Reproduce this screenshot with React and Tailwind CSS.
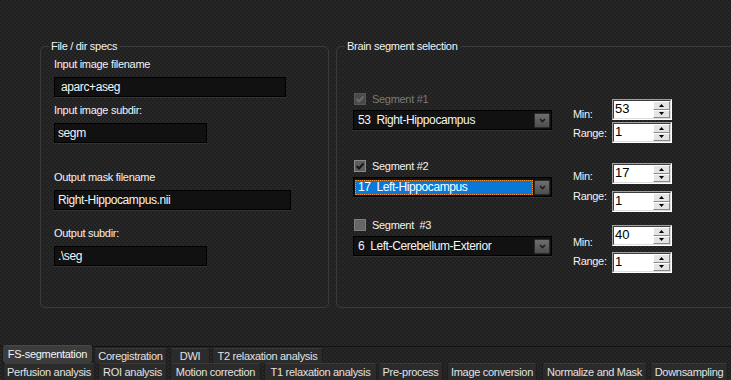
import React from 'react';

const topTabs = [
    { label: 'FS-segmentation', cls: 'ml-[3px] w-[89px]', active: true },
    { label: 'Coregistration', cls: 'ml-[2px] w-[73px]' },
    { label: 'DWI', cls: 'ml-[3px] w-[40px]' },
    { label: 'T2 relaxation analysis', cls: 'ml-[2px] w-[111px]' },
];

const bottomTabs = [
    { label: 'Perfusion analysis', cls: 'ml-[3px] w-[92px]' },
    { label: 'ROI analysis', cls: 'ml-[3px] w-[69px]' },
    { label: 'Motion correction', cls: 'ml-[3px] w-[91px]' },
    { label: 'T1 relaxation analysis', cls: 'ml-[3px] w-[113px]' },
    { label: 'Pre-process', cls: 'ml-[1px] w-[65px]' },
    { label: 'Image conversion', cls: 'ml-[4px] w-[90px]' },
    { label: 'Normalize and Mask', cls: 'ml-[5px] w-[105px]' },
    { label: 'Downsampling', cls: 'ml-[3px] w-[78px]' },
];

const segments = [
    {
        title: 'Segment #1',
        state: 'disabled',
        value: '53  Right-Hippocampus',
        min: '53',
        range: '1',
        block: 'mt-[40px]',
        minLabel: 'mt-[15px]',
        rangeLabel: 'mt-[6px]',
        minSpin: 'mt-[6px]',
        rangeSpin: 'mt-[2px]',
    },
    {
        title: 'Segment #2',
        state: 'checked',
        value: '17  Left-Hippocampus',
        selected: true,
        min: '17',
        range: '1',
        block: 'mt-[17px]',
        minLabel: 'mt-[10px]',
        rangeLabel: 'mt-[7px]',
        minSpin: 'mt-[3px]',
        rangeSpin: 'mt-[7px]',
    },
    {
        title: 'Segment  #3',
        state: 'unchecked',
        value: '6  Left-Cerebellum-Exterior',
        min: '40',
        range: '1',
        block: 'mt-[7px]',
        minLabel: 'mt-[17px]',
        rangeLabel: 'mt-[6px]',
        minSpin: 'mt-[6px]',
        rangeSpin: 'mt-[6px]',
    },
];

function TextField({ value, width, pad = 'pl-[3px]' }) {
    return (
        <div className={`${width} ${pad} h-[20px] flex items-center bg-[#111111] border border-black shadow-[0_1px_0_#333] text-[12px] tracking-[-0.4px] text-[#f4f4f4] whitespace-pre`}>
            {value}
        </div>
    );
}

function Checkbox({ state }) {
    const box = {
        disabled: 'bg-[#4a4a4a] border-[#575757]',
        checked: 'bg-[#5e5e5e] border-[#8a8a8a]',
        unchecked: 'bg-[#666666] border-[#7e7e7e]',
    }[state];
    return (
        <div className={`w-[12px] h-[12px] border ${box} flex items-center justify-center`}>
            {state !== 'unchecked' && (
                <svg width="10" height="10" viewBox="0 0 10 10">
                    <path
                        d="M1.5 5 L4 7.5 L8.5 2.5"
                        fill="none"
                        stroke={state === 'disabled' ? '#6c6c6c' : '#151515'}
                        strokeWidth="1.9"
                    />
                </svg>
            )}
        </div>
    );
}

function ComboButton() {
    return (
        <div className="w-[16px] h-[15px] mr-[1px] shrink-0 flex items-center justify-center rounded-[1px] border border-[#2a2a2a] bg-gradient-to-b from-[#6e6e6e] to-[#4e4e4e]">
            <svg width="7" height="5" viewBox="0 0 7 5">
                <path d="M1 1 L3.5 3.5 L6 1" fill="none" stroke="#1c1c1c" strokeWidth="1.6" />
            </svg>
        </div>
    );
}

function Combo({ value, selected }) {
    return (
        <div className="w-[199px] h-[20px] flex items-center justify-between bg-[#111111] border border-black shadow-[0_1px_0_#333] text-[12px] tracking-[-0.4px] whitespace-pre">
            {selected ? (
                <div className="ml-[1px] w-[178px] h-[15px] flex items-center pl-[3px] bg-[#0a78d6] outline outline-1 outline-dotted outline-[#f09030] -outline-offset-1 text-white">
                    {value}
                </div>
            ) : (
                <div className="pl-[4px] text-[#f4f4f4]">{value}</div>
            )}
            <ComboButton />
        </div>
    );
}

function SpinButton({ up }) {
    return (
        <div className="flex-1 flex items-center justify-center bg-[#e4e4e4] border border-t-white border-l-white border-b-[#8a8a8a] border-r-[#8a8a8a]">
            <svg width="5" height="3" viewBox="0 0 5 3">
                <path d={up ? 'M0 3 L2.5 0 L5 3 Z' : 'M0 0 L2.5 3 L5 0 Z'} fill="#000" />
            </svg>
        </div>
    );
}

function Spin({ value, cls }) {
    return (
        <div className={`${cls} w-[60px] h-[21px] border border-t-[#a0a0a0] border-l-[#a0a0a0] border-b-white border-r-white`}>
            <div className="flex h-full bg-white border border-t-[#3c3c3c] border-l-[#3c3c3c] border-b-[#dcdcdc] border-r-[#dcdcdc]">
                <div className="flex-1 pl-px text-[13px] leading-[15px] tracking-normal text-black">{value}</div>
                <div className="flex flex-col w-[17px]">
                    <SpinButton up />
                    <SpinButton />
                </div>
            </div>
        </div>
    );
}

function Segment({ seg }) {
    return (
        <div className={`${seg.block} flex items-start`}>
            <div className="flex flex-col">
                <div className="h-[12px] flex items-center ml-[1px]">
                    <Checkbox state={seg.state} />
                    <span className={`ml-[6px] whitespace-pre ${seg.state === 'disabled' ? 'text-[#7a7a7a]' : 'text-[#f2f2f2]'}`}>
                        {seg.title}
                    </span>
                </div>
                <div className="mt-[5px]">
                    <Combo value={seg.value} selected={seg.selected} />
                </div>
            </div>
            <div className="ml-[21px] w-[39px] flex flex-col">
                <div className={seg.minLabel}>Min:</div>
                <div className={seg.rangeLabel}>Range:</div>
            </div>
            <div className="flex flex-col">
                <Spin value={seg.min} cls={seg.minSpin} />
                <Spin value={seg.range} cls={seg.rangeSpin} />
            </div>
        </div>
    );
}

function Tab({ tab, row }) {
    if (tab.active) {
        return (
            <div className={`${tab.cls} h-[18px] flex items-center justify-center rounded-[3px] bg-[#3c3c3c] border-t border-[#4a4a4a] shadow-[0_1px_2px_#111] text-[#f4f4f4] whitespace-nowrap`}>
                {tab.label}
            </div>
        );
    }
    return (
        <div className={`${tab.cls} ${row === 1 ? 'mt-[3px] h-[15px]' : 'h-[17px]'} flex items-center justify-center rounded-t-[3px] bg-[#2b2b2b] border-t border-x border-t-[#3a3a3a] border-x-[#1d1d1d] text-[#e2e2e2] whitespace-nowrap`}>
            {tab.label}
        </div>
    );
}

export default function App() {
    return (
        <div className="w-[731px] h-[380px] overflow-hidden flex flex-col bg-[#232323] bg-[image:conic-gradient(#282828_25%,#1f1f1f_0_50%,#282828_0_75%,#1f1f1f_0)] bg-size-[4px_4px] text-[11px] leading-[13px] tracking-[-0.3px] text-[#f2f2f2] font-['Liberation_Sans',Arial,sans-serif]">
            <div className="flex pt-[40px] pl-[40px]">
                {/* File / dir specs */}
                <fieldset className="w-[289px] h-[268px] shrink-0 border border-[#3b3b3b] rounded-[5px]">
                    <legend className="ml-[8px] px-[2px]">File / dir specs</legend>
                    <div className="flex flex-col items-start pl-[13px]">
                        <div className="mt-[5px]">Input image filename</div>
                        <div className="mt-[6px]">
                            <TextField value="aparc+aseg" width="w-[232px]" pad="pl-[6px]" />
                        </div>
                        <div className="mt-[7px]">Input image subdir:</div>
                        <div className="mt-[6px]">
                            <TextField value="segm" width="w-[153px]" />
                        </div>
                        <div className="mt-[28px]">Output mask filename</div>
                        <div className="mt-[6px]">
                            <TextField value="Right-Hippocampus.nii" width="w-[237px]" />
                        </div>
                        <div className="mt-[17px]">Output subdir:</div>
                        <div className="mt-[6px]">
                            <TextField value=".\seg" width="w-[153px]" />
                        </div>
                    </div>
                </fieldset>

                {/* Brain segment selection */}
                <fieldset className="ml-[7px] w-[420px] h-[268px] shrink-0 border border-[#3b3b3b] rounded-[5px]">
                    <legend className="ml-[8px] px-[2px]">Brain segment selection</legend>
                    <div className="flex flex-col pl-[16px]">
                        {segments.map((seg) => (
                            <Segment key={seg.title} seg={seg} />
                        ))}
                    </div>
                </fieldset>
            </div>

            {/* Tabs */}
            <div className="mt-[38px] border-t border-[#121212]">
                <div className="-mt-[2px] h-[18px] flex items-start">
                    {topTabs.map((tab) => (
                        <Tab key={tab.label} tab={tab} row={1} />
                    ))}
                </div>
                <div className="h-[17px] flex items-start">
                    {bottomTabs.map((tab) => (
                        <Tab key={tab.label} tab={tab} row={2} />
                    ))}
                </div>
            </div>
        </div>
    );
}
